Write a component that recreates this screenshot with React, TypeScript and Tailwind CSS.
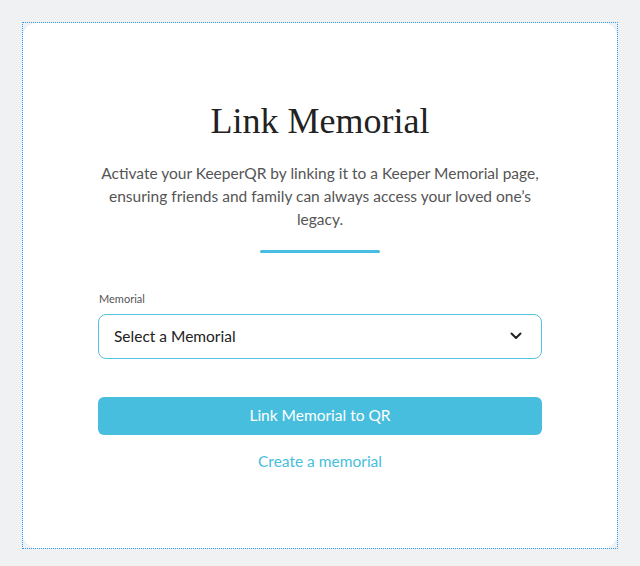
import React, { useState } from 'react';

export default function App() {
  const [memorial, setMemorial] = useState('');

  return (
    <div className="min-h-screen bg-[#f0f1f3] px-[22px] pt-[22px] pb-[17px]" style={{ fontFamily: 'Lato, "Noto Sans", sans-serif' }}>
      {/* Focus frame around the card */}
      <div className="border border-dotted border-[#2e98f2]">
        <div className="h-[525px] rounded-[14px] bg-white">
          <div className="mx-auto flex w-[444px] flex-col items-center pt-[76px]">
            <h1 className="text-[36px] leading-[44px] text-[#222]" style={{ fontFamily: '"Liberation Serif", serif' }}>
              Link Memorial
            </h1>
            <p className="mt-[19px] text-center text-[15.5px] leading-[23px] text-[#555]">
              Activate your KeeperQR by linking it to a Keeper Memorial page, ensuring friends and family can always access your loved one’s legacy.
            </p>
            <div className="mt-[19px] h-[3px] w-[120px] rounded-full bg-[#47bee0]" />

            {/* Memorial select */}
            <div className="mt-[38px] w-full">
              <label className="block pl-[1px] text-[11px] leading-[16px] text-[#555]">Memorial</label>
              <div className="relative mt-[7px]">
                <select
                  value={memorial}
                  onChange={(e) => setMemorial(e.target.value)}
                  className="h-[45px] w-full appearance-none rounded-[8px] border border-[#56c2e2] bg-white pl-[15px] text-[15.5px] text-[#222] outline-none"
                >
                  <option value="">Select a Memorial</option>
                </select>
                <svg className="pointer-events-none absolute right-[20px] top-[17px]" width="12" height="10" viewBox="0 0 12 10" fill="none">
                  <path d="M1.5 2.5L6 7l4.5-4.5" stroke="#222" strokeWidth="2" strokeLinecap="round" strokeLinejoin="round" />
                </svg>
              </div>
            </div>

            <button className="mt-[38px] h-[38px] w-full rounded-[6px] bg-[#47bedd] text-[15.5px] text-white">
              Link Memorial to QR
            </button>
            <a href="#" className="mt-[16px] text-[15.5px] leading-[20px] text-[#47bedd]">
              Create a memorial
            </a>
          </div>
        </div>
      </div>
    </div>
  );
}
